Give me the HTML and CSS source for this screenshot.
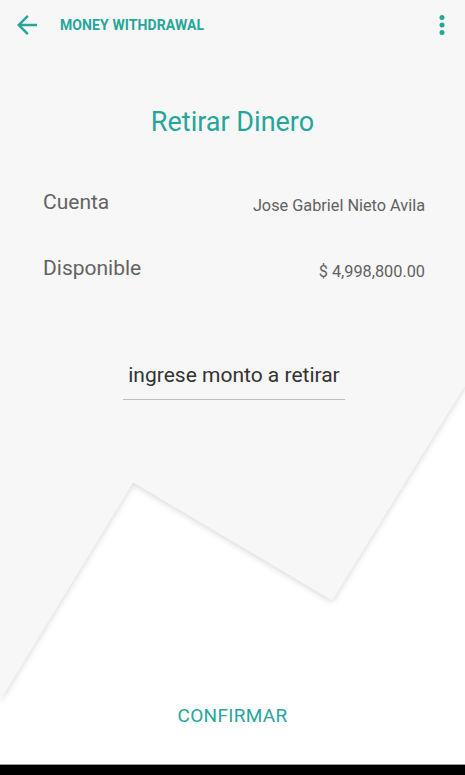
FILE: index.html
```html
<!DOCTYPE html>
<html>
<head>
<meta charset="utf-8">
<link rel="stylesheet" href="styles.css">
</head>
<body>
<div class="screen">
  <svg class="bg" width="465" height="765" viewBox="0 0 465 765">
    <defs>
      <filter id="sh" x="-10%" y="-10%" width="120%" height="130%">
        <feDropShadow dx="0" dy="2" stdDeviation="3" flood-color="#000" flood-opacity="0.16"/>
      </filter>
    </defs>
    <polygon points="0,-10 465,-10 465,385 332,600 133,482 0,700" fill="#f7f7f7" filter="url(#sh)"/>
  </svg>
  <header class="topbar">
    <svg class="icon back" width="30" height="30" viewBox="0 0 24 24"><path d="M20 11H7.83l5.59-5.59L12 4l-8 8 8 8 1.41-1.41L7.83 13H20v-2z" fill="#26a69a"/></svg>
    <div class="title">MONEY WITHDRAWAL</div>
    <svg class="icon more" width="30" height="30" viewBox="0 0 24 24"><circle cx="12" cy="6" r="2" fill="#26a69a"/><circle cx="12" cy="12" r="2" fill="#26a69a"/><circle cx="12" cy="18" r="2" fill="#26a69a"/></svg>
  </header>
  <main class="content">
    <h1 class="heading">Retirar Dinero</h1>
    <div class="row row-first">
      <span class="label">Cuenta</span>
      <span class="value">Jose Gabriel Nieto Avila</span>
    </div>
    <div class="row row-second">
      <span class="label">Disponible</span>
      <span class="value">$ 4,998,800.00</span>
    </div>
    <div class="field">
      <div class="input">ingrese monto a retirar</div>
    </div>
  </main>
  <div class="spacer"></div>
  <div class="actions">
    <button class="confirm">CONFIRMAR</button>
  </div>
  <div class="navbar"></div>
</div>
</body>
</html>
```
FILE: styles.css
```css
* { box-sizing: border-box; }
html, body { margin: 0; padding: 0; background: #fff; }
body { font-family: Roboto, "Noto Sans", sans-serif; }
.screen {
  position: relative;
  width: 465px;
  height: 775px;
  display: flex;
  flex-direction: column;
  overflow: hidden;
  background: #fff;
}
.bg { position: absolute; left: 0; top: 0; z-index: 0; }
.topbar, .content, .actions, .navbar, .spacer { position: relative; z-index: 1; }
.topbar {
  height: 50px;
  display: flex;
  align-items: center;
  padding: 0 8px 0 12px;
}
.icon { display: block; flex: none; }
.title {
  margin-left: 18px;
  flex: 1;
  color: #26a69a;
  font-weight: 700;
  font-size: 14px;
  letter-spacing: 0.1px;
}
.content { display: flex; flex-direction: column; }
.heading {
  margin: 56px 0 0;
  text-align: center;
  font-weight: 400;
  font-size: 27px;
  line-height: 32px;
  color: #26a69a;
}
.row {
  display: flex;
  justify-content: space-between;
  align-items: flex-start;
  padding: 0 40px 0 43px;
  height: 28px;
}
.row-first { margin-top: 50px; }
.row-second { margin-top: 38px; }
.label { font-size: 21px; line-height: 28px; color: #636363; }
.value { font-size: 16.3px; line-height: 28px; margin-top: 4px; color: #616161; }
.field {
  margin-top: 79px;
  display: flex;
  justify-content: center;
}
.input {
  width: 222px;
  margin-left: 3px;
  text-align: center;
  font-size: 21px;
  line-height: 28px;
  color: #333;
  padding-bottom: 10px;
  border-bottom: 1px solid #bdbdbd;
}
.spacer { flex: 1; }
.actions {
  display: flex;
  justify-content: center;
  padding-bottom: 37px;
}
.confirm {
  border: 0;
  background: transparent;
  font-family: Roboto, sans-serif;
  font-size: 19px;
  color: #26a69a;
  padding: 0;
  line-height: 22px;
  letter-spacing: 0.3px;
}
.navbar {
  height: 11px;
  background: #000;
  border-top: 1px solid #9e9e9e;
  flex: none;
}
```
